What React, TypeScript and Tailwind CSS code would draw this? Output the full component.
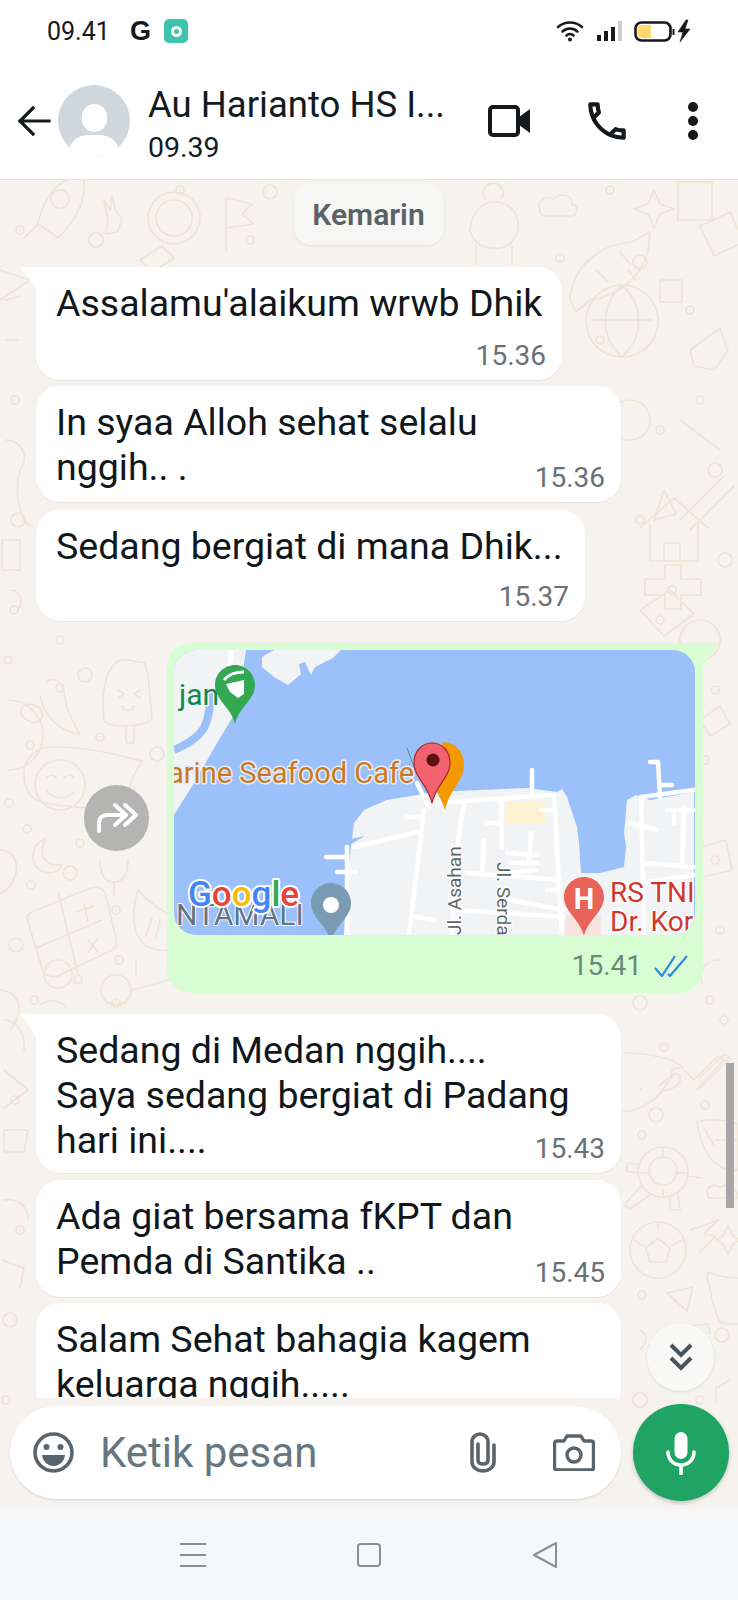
const font = "font-['Roboto',sans-serif]";

interface IBubble {
  lines: string[];
  time?: string;
  width: string;
  top: string;
  timeOffset?: string;
  tail?: boolean;
}

const dots = [
  [96, 240], [20, 230], [180, 190], [205, 290], [270, 192], [250, 240], [560, 258], [610, 190], [640, 262], [690, 310], [600, 340],
  [15, 400], [18, 520], [14, 610], [8, 660], [60, 688], [85, 675], [60, 640], [30, 745], [100, 737], [157, 754], [9, 803], [27, 829],
  [80, 843], [70, 873], [31, 885], [116, 910], [116, 1003], [16, 945], [119, 960], [78, 979], [34, 1000], [640, 1003], [664, 1047],
  [700, 400], [660, 430], [715, 470], [640, 520], [672, 590], [690, 650], [725, 560], [660, 620], [715, 690], [705, 760], [656, 1115],
  [642, 1135], [705, 1105], [642, 1295], [722, 1335], [715, 860], [720, 930], [710, 1000], [640, 1400], [700, 1400], [20, 1230],
  [15, 1100], [10, 1320], [724, 1020], [650, 1480], [6, 1400], [30, 1480],
];

const Wallpaper = () => (
  <svg className="absolute left-0 top-0" width="738" height="1329" viewBox="0 180 738 1329" fill="none" stroke="#eee3d5" strokeWidth="1.7" strokeLinecap="round" strokeLinejoin="round">
    {dots.map(([x, y], i) => (
      <circle key={i} cx={x} cy={y} r={i % 4 === 0 ? 7 : 4} />
    ))}
    {/* rocket */}
    <path d="M84 180c2 22-8 40-26 58l-20-14c4-20 14-36 28-44M38 224l-14 14M60 190a9 9 0 1 0 .1 0" />
    {/* hand, astronaut, flag */}
    <path d="M108 220l-4-20 6 10 2-14 4 16 6 6-4 14-12 2zM174 192a26 26 0 1 0 .1 0M174 200a18 18 0 1 0 .1 0M226 250v-52l26 6-10 10 12 10-28 4" />
    <path d="M140 260l22-14 12 12-22 14z" />
    {/* girl */}
    <path d="M470 230c2-20 14-30 28-28 14 2 22 14 20 28-4 14-14 20-26 18-12 0-20-8-22-18zM486 200a10 10 0 1 1 16 -2M476 246v18M512 246v18" />
    {/* cloud, star, frame */}
    <path d="M540 210c-4-10 8-16 14-10 4-8 18-6 18 4 8 2 6 12-2 12h-26c-2 0-4-2-4-6zM654 190l6 14 14 5-14 5-6 14-6-14-14-5 14-5zM678 182h34v38h-34zM700 226l30-14 14 30-30 14z" />
    {/* fish */}
    <path d="M570 300c2-34 30-56 62-58l18-10-2 18c-6 26-28 46-58 50l-14 12zM620 252l10 12M596 270l12 12" />
    {/* ball */}
    <path d="M622 285a36 36 0 1 0 .1 0M622 285c-22 20-22 52 0 72M622 285c22 20 22 52 0 72M592 320h60M628 270l8 10" />
    <path d="M660 280h22v22h-22zM690 350l30-22 8 22-14 20-20-4zM680 420l40 30M664 490l-10 30 22-6zM680 520l44-44M690 530l44-44" />
    {/* house */}
    <path d="M640 528l34-30 34 30M650 525v36h48v-36M664 561v-18h16v18" />
    <path d="M625 545h20v-14h16v14h20v16h-20v14h-16v-14h-20z" transform="translate(20 34)" />
    <path d="M590 390a24 24 0 1 0 .1 0M630 400a20 20 0 1 0 .1 0M700 620a20 20 0 1 0 .1 0M640 610l30-20 24 24-30 22z" />
    {/* ice cream */}
    <path d="M104 720c-4-26 2-56 18-60 10-2 16 4 22 2l4 12 4 44c0 8-46 12-48 2zM126 726v14c0 4 8 4 8 0v-15M118 690l6 4-6 4M140 690l-6 4 6 4M122 706c2 6 10 6 12 0" />
    {/* chili */}
    <path d="M46 682c8-6 16 0 18 10 2 18 8 30 16 42-18-2-36-16-40-38M22 708c4-6 12-4 18 0 6 8 0 16-8 14-8-2-14-8-10-14" />
    {/* smiley bubble */}
    <path d="M60 750a25 25 0 1 0 .1 0" transform="translate(0 10)" />
    <path d="M24 775c0-18 12-28 30-28 36 0 64 8 88 14l-10 18-10 30c-20 0-54-2-78-6-14-4-20-14-20-28zM46 778c4-4 8-4 10 0M64 778c4-4 8-4 10 0M46 790c8 10 20 10 28 2" />
    {/* moon, mic, calculator */}
    <path d="M46 838c-14 6-18 24-6 32 10 6 20 2 22-6-10 4-20-4-20-12 0-6 2-10 4-14zM100 860c0 16 6 22 14 22s14-6 14-22M114 882v14" />
    <path d="M32 912l58-24c8-2 14 0 16 8l10 42c2 8-2 12-8 14l-50 24c-8 2-14 0-16-8l-14-46c-2-6 0-8 4-10zM58 892l20 82M36 948l66-28M84 904l4 18M76 912l18-6M88 940l10 12M98 938l-10 14" />
    <path d="M46 948a14 14 0 1 0 .1 0" transform="translate(12 12)" />
    <path d="M138 890c12 14 24 20 30 24v36c-12 2-26-2-32-18-4-16-2-30 2-42zM152 918l-6 18M160 920l-4 18" />
    {/* scissors */}
    <path d="M116 975a15 15 0 1 0 .1 0M132 990l44-12M136 960v16" />
    <path d="M40 1005c6-6 20-6 26 2M-4 990c24 0 30 20 14 40" />
    <path d="M8 700a30 30 0 0 1 0 70M0 850c20 0 24 30 0 44" />
    {/* cup, checks */}
    <path d="M623 1053c22 0 48 4 60 14l-10 2c-4 4 2 8-6 14-10 20-34 30-44 28M660 1085l12-10c4-2 10-2 8 6-2 6-12 10-18 10M640 1088l2 2" />
    <path d="M684 1070l10 10 24-24 6 4-28 30M700 1078l24-24 6 4-30 30" />
    {/* rugby, turtle, cloud, soccer, pot */}
    <path d="M697 1122c14-4 30-2 41 2v46c-20 2-36-14-41-48zM704 1128l10 18M716 1140h22" />
    <path d="M663 1147a25 25 0 1 0 .1 0M663 1157a14 14 0 1 0 .1 0M663 1147v10M640 1173h10M676 1173h10M663 1190v8M640 1165l-12-2-2 8 12 2M688 1176l14 2M650 1195l-20 14-6-4 18-20M670 1198v12h10l-2-14" />
    <path d="M708 1196c-4-10 8-14 12-8 6-6 18 0 18 10h-30z" />
    <path d="M658 1222a28 28 0 1 0 .1 0M658 1238l12 10-4 14h-16l-4-14zM658 1222v8M634 1240l10 6M682 1240l-10 6M690 1230l28-10-14 14 12 2-16 16" />
    <path d="M728 1226l6 11 6 3-6 3-6 11-6-11-6-3 6-3z" />
    <path d="M667 1293l26-6-6 24zM708 1272c10 4 22 6 30 6M708 1272c-2 8 0 12 2 16 2 14 6 26 10 34 4 2 12 2 18 2" />
    <path d="M640 1330c10 6 6 14 0 20M690 1326l18-2 2 10M660 1360c10-12 26-6 22 10M600 1370v10M730 1380l-14 8v14" />
    {/* around the first bubbles */}
    <path d="M0 270l30 10-30 20M20 470c-8 30 4 56 12 56M6 300l14-4M6 340h12M6 440a18 18 0 0 1 14 30M2 540h18v30H2zM10 590c10 0 14 10 8 20" />
    <path d="M4 1020c12 0 22 14 20 30M4 1070l24 20-24 18M4 1130h24l-4 22H4zM4 1200c14-2 24 6 24 20M2 1260l22 8-4 20" />
    <path d="M636 690c12-2 18 10 8 18-10 6-18-2-12-14M700 720l20-14 10 18-20 12zM650 770c16-4 30 6 30 20s-14 24-28 20M690 850l36-10 6 30-34 8zM650 900a24 24 0 1 0 .1 0M720 960c-14 0-22 10-18 24" />
  </svg>
);

const StatusBar = () => (
  <div className="h-[62px] flex items-center pl-[47px] pr-[48px] bg-white text-[#15191c]">
    <span className="text-[25px] leading-none w-[83px]">09.41</span>
    <span className="text-[27px] font-black leading-none w-[34px] font-['Liberation_Sans',sans-serif]">G</span>
    <div className="w-[24px] h-[24px] rounded-[5px] bg-[#3cc4ad] flex items-center justify-center">
      <div className="w-[11px] h-[11px] rounded-full border-[3px] border-white" />
    </div>
    <svg className="ml-auto" width="134" height="24" viewBox="0 0 134 24" fill="none">
      <path d="M2 8c7-6 17-6 24 0M6.500 12.500c4.500-4 10.500-4 15 0M10.500 16.500c2-2 5-2 7 0" stroke="#15191c" strokeWidth="2.600" strokeLinecap="round" />
      <circle cx="14" cy="20.500" r="2" fill="#15191c" />
      <rect x="41" y="16" width="4" height="6" fill="#15191c" />
      <rect x="48" y="12" width="4" height="10" fill="#15191c" />
      <rect x="55" y="8" width="4" height="14" fill="#15191c" />
      <rect x="62" y="2" width="4" height="20" fill="#cfcfcf" />
      <rect x="79.500" y="3.500" width="35" height="18" rx="6" fill="#fff" stroke="#15191c" strokeWidth="2.600" />
      <path d="M85 6h10v13H85c-2 0-3.500-2-3.500-4V9c0-2 1.500-3 3.500-3z" fill="#fbd96f" />
      <rect x="116.500" y="10" width="2" height="6" fill="#15191c" />
      <path d="M130 1l-8 12h5l-3 10 10-13h-5l3-9z" fill="#15191c" stroke="#15191c" strokeWidth="0.600" />
    </svg>
  </div>
);

const Header = () => (
  <div className="h-[118px] flex items-center bg-white border-b border-[#e6e3df]">
    <svg className="ml-[17px]" width="34" height="34" viewBox="0 0 34 34" fill="none" stroke="#15191c" strokeWidth="3.200" strokeLinecap="square">
      <path d="M3 17h29M16 4L3 17l13 13" />
    </svg>
    <div className="ml-[7px] w-[72px] h-[72px] rounded-full bg-[#cfd7df] overflow-hidden flex flex-col items-center shrink-0">
      <div className="mt-[19px] w-[25px] h-[28px] rounded-full bg-white shrink-0" />
      <div className="mt-[3px] w-[52px] h-[40px] rounded-full bg-white shrink-0" />
    </div>
    <div className="ml-[18px] mt-[7px] w-[338px] flex flex-col text-[#111b21]">
      <span className="text-[36.5px] leading-[44px]">Au Harianto HS I...</span>
      <span className="text-[28.5px] leading-[36px] mt-[3px]">09.39</span>
    </div>
    <svg width="44" height="34" viewBox="0 0 44 34" fill="none">
      <rect x="4" y="3" width="28" height="28" rx="3" stroke="#15191c" strokeWidth="4" />
      <path d="M33 13l11-8v24l-11-8z" fill="#15191c" />
    </svg>
    <svg className="ml-[52px]" width="50" height="50" viewBox="0 0 24 24" fill="#15191c">
      <path d="M6.540 5c.06.89.21 1.760.45 2.590l-1.200 1.200c-.41-1.200-.67-2.470-.76-3.790h1.510m9.860 12.020c.85.24 1.720.39 2.600.45v1.490c-1.320-.09-2.590-.35-3.800-.75l1.200-1.190M7.500 3H4c-.55 0-1 .45-1 1 0 9.390 7.610 17 17 17 .55 0 1-.45 1-1v-3.490c0-.55-.45-1-1-1-1.240 0-2.450-.2-3.570-.57-.1-.04-.21-.05-.31-.05-.26 0-.51.1-.71.29l-2.200 2.200c-2.830-1.450-5.150-3.760-6.590-6.590l2.200-2.200c.28-.28.36-.67.25-1.020C8.700 6.450 8.500 5.250 8.500 4c0-.55-.45-1-1-1z" />
    </svg>
    <div className="ml-[56px] flex flex-col gap-[4px]">
      <div className="w-[10px] h-[10px] rounded-full bg-[#15191c]" />
      <div className="w-[10px] h-[10px] rounded-full bg-[#15191c]" />
      <div className="w-[10px] h-[10px] rounded-full bg-[#15191c]" />
    </div>
  </div>
);

const Bubble = ({ lines, time, width, top, timeOffset, tail }: IBubble) => (
  <div className={`relative shrink-0 ${width} ${top} flex flex-col bg-white pl-[20px] pr-[16px] pt-[14px] pb-[8px] rounded-[24px] ${tail ? "rounded-tl-none" : ""} shadow-[0_1px_1px_rgba(0,0,0,0.06)]`}>
    {tail && (
      <svg className="absolute -left-[15px] top-0" width="16" height="24" viewBox="0 0 16 24">
        <path d="M0 0h16v24C10 14 5 8 1 3 0 2 0 1 0 0z" fill="#fff" />
      </svg>
    )}
    <div className="text-[37.5px] leading-[45px] text-[#10171b] whitespace-nowrap">
      {lines.map((l) => (
        <div key={l}>{l}</div>
      ))}
    </div>
    {time && <span className={`self-end text-[28px] leading-[32px] text-[#697175] ${timeOffset}`}>{time}</span>}
  </div>
);

const MapPin = ({ x, y, fill }: { x: number; y: number; fill: string }) => (
  <path d={`M${x} ${y}c-11 0-20 9-20 20 0 15 16 22 20 39 4-17 20-24 20-39 0-11-9-20-20-20z`} fill={fill} />
);

const roads = [
  "M417 783l12 24M434 803l120-8 8 140M424 810l-15 125M407 817h14",
  "M464 803l-8 50-4 82M501 800l1 47M487 823h14M541 810h13M531 833l-2 27M484 840l-2 33",
  "M507 853l30 2M510 863l27 0M510 873l26-3M467 873l93 7M457 910l107 7M510 900l54 10M547 890h13",
  "M532 770v22M650 762h8l2 35M660 785h12",
  "M641 798l3 137M641 797l53-7M631 823l26 7M667 810h27M674 813v10M684 807l-2 56M647 863l47 4M628 885l66-10",
  "M354 847l63-15M347 847v88M326 857h21M337 872h19M414 917l20 3",
];

const MapView = () => (
  <svg className="block rounded-[22px]" width="521" height="285" viewBox="174 650 521 285">
    <rect x="174" y="650" width="521" height="285" fill="#9cc0f9" />
    <path d="M174 650h72l-3 20-6 40-20 33-23 40-20 32z" fill="#f1f3f4" />
    <path d="M174 750c14-6 24-12 30-22 6-12 6-24 6-38" fill="none" stroke="#9cc0f9" strokeWidth="8" />
    <path d="M232 650l-4 24" stroke="#fff" strokeWidth="5" />
    <path d="M262 657l12-7h67l-8 8-18 9-4 8-6-13-6 2 2 10-13 11-14-8-12-10z" fill="#f1f3f4" />
    <path d="M344 935l3-58 4-30 3-24 10-13 23-10 30-5 17-3 93-4 30 4 5-3 5 8 10 30 2 16 2 30 19 0 24-6 2-20-2-14 3-33 9-5 14 5 44-8v143z" fill="#f1f3f4" />
    <path d="M341 841l24-5-14 8z" fill="#9cc0f9" />
    <rect x="505" y="801" width="40" height="22" fill="#fdf1d2" />
    <rect x="565" y="915" width="36" height="20" fill="#f9e4e2" />
    <rect x="339" y="925" width="5" height="10" fill="#9cc0f9" />
    {roads.map((d) => (
      <path key={d} d={d} fill="none" stroke="#fff" strokeWidth="4.500" strokeLinecap="round" strokeLinejoin="round" />
    ))}

    <g fontFamily="Roboto, sans-serif" style={{ paintOrder: "stroke" }} stroke="#fff" strokeWidth="3" strokeLinejoin="round">
      <text x="179" y="705" fontSize="30" fill="#0c8a52" stroke="#f1f3f4">jan</text>
      <text x="168" y="783" fontSize="29" fill="#c9791f" stroke="#e8eefb">arine Seafood Cafe</text>
      <text x="176" y="925" fontSize="30" fill="#5f7486" strokeWidth="2">NTAMALI</text>
      <text x="610" y="902" fontSize="28" fill="#d0382e">RS TNI</text>
      <text x="610" y="931" fontSize="28" fill="#d0382e">Dr. Kor</text>
      <text transform="translate(461 935) rotate(-90)" fontSize="19" fill="#5f6368">Jl. Asahan</text>
      <text transform="translate(497 862) rotate(90)" fontSize="19" fill="#5f6368">Jl. Serda</text>
      <text x="188" y="906" fontSize="35" fontWeight="500" strokeWidth="4">
        <tspan fill="#4285f4">G</tspan>
        <tspan fill="#ea4335">o</tspan>
        <tspan fill="#fbbc05">o</tspan>
        <tspan fill="#4285f4">g</tspan>
        <tspan fill="#34a853">l</tspan>
        <tspan fill="#ea4335">e</tspan>
      </text>
    </g>

    <MapPin x={235} y={665} fill="#33a852" />
    <path d="M226 684l18-4v14l-6 4-8-6z" fill="#fff" />
    <path d="M224 680c4-5 12-8 20-8" stroke="#fff" strokeWidth="3" fill="none" />
    <MapPin x={331} y={883} fill="#7a9bb3" />
    <circle cx="331" cy="905" r="8" fill="#fff" />
    <MapPin x={584} y={877} fill="#e8645b" />
    <text x="584" y="909" textAnchor="middle" fontFamily="Roboto, sans-serif" fontSize="29" fontWeight="700" fill="#fff">H</text>
    <path d="M407 748l9 24" stroke="#3aa76d" strokeWidth="1" />
    <path d="M443 742c11 0 21 9 21 22 0 18-14 24-19 46-3-10-8-18-12-24z" fill="#f29900" />
    <path d="M432 743c-10 0-18 8-18 20 0 14 14 22 18 40 4-18 18-26 18-40 0-12-8-20-18-20z" fill="#f2626f" stroke="#a8292f" strokeWidth="1.200" />
    <circle cx="433" cy="760" r="6.500" fill="#5a1010" />
  </svg>
);

export default function App() {
  return (
    <div className={`${font} w-[738px] h-[1600px] flex flex-col overflow-hidden bg-white`}>
      <StatusBar />
      <Header />

      <div className="relative h-[1329px] shrink-0 bg-[#f6f3ee] overflow-hidden">
        <Wallpaper />

        <div className="relative h-[1218px] overflow-hidden flex flex-col pl-[36px] pr-[35px] pt-[3px]">
          <div className="self-center shrink-0 w-[150px] h-[62px] ml-[-2px] flex items-center justify-center rounded-[16px] bg-[#f6f6f5] shadow-[0_1px_2px_rgba(0,0,0,0.08)] text-[30px] font-semibold text-[#5b6267]">
            Kemarin
          </div>

          <Bubble tail lines={["Assalamu'alaikum wrwb Dhik"]} time="15.36" width="w-[526px]" top="mt-[22px]" timeOffset="mt-[14px]" />
          <Bubble lines={["In syaa Alloh sehat selalu", "nggih.. ."]} time="15.36" width="w-[585px]" top="mt-[6px]" timeOffset="-mt-[28px]" />
          <Bubble lines={["Sedang bergiat di mana Dhik..."]} time="15.37" width="w-[549px]" top="mt-[8px]" timeOffset="mt-[12px]" />

          <div className="self-end mt-[22px] flex items-center gap-[18px] shrink-0">
            <div className="w-[65px] h-[66px] rounded-full bg-[#b4b4b2] flex items-center justify-center">
              <svg width="42" height="32" viewBox="0 0 42 32" fill="none" stroke="#fff" strokeWidth="4" strokeLinecap="round" strokeLinejoin="round">
                <path d="M3 29v-8c0-5 3-8 8-8h14M19 3l11 10-11 10M29 3l11 10-11 10" />
              </svg>
            </div>
            <div className="relative w-[536px] h-[350px] bg-[#d9fdd3] rounded-[24px] rounded-tr-none p-[7px] flex flex-col">
              <svg className="absolute -right-[15px] top-0" width="16" height="24" viewBox="0 0 16 24">
                <path d="M16 0H0v24C6 14 11 8 15 3c1-1 1-2 1-3z" fill="#d9fdd3" />
              </svg>
              <MapView />
              <div className="mt-[15px] pr-[7px] flex items-center justify-end gap-[12px]">
                <span className="text-[28px] leading-[32px] text-[#6b8a74]">15.41</span>
                <svg width="35" height="22" viewBox="0 0 35 22" fill="none" stroke="#2f86e6" strokeWidth="2.200">
                  <path d="M1 13l7 8L21 1M14 19l2 2L33 1" />
                </svg>
              </div>
            </div>
          </div>

          <Bubble tail lines={["Sedang di Medan nggih....", "Saya sedang bergiat di Padang", "hari ini...."]} time="15.43" width="w-[585px]" top="mt-[21px]" timeOffset="-mt-[30px]" />
          <Bubble lines={["Ada giat bersama fKPT dan", "Pemda di Santika .."]} time="15.45" width="w-[585px]" top="mt-[7px]" timeOffset="-mt-[27px]" />
          <Bubble lines={["Salam Sehat bahagia kagem", "keluarga nggih....."]} width="w-[585px]" top="mt-[6px]" />
        </div>

        {/* scrollbar */}
        <div className="absolute left-[726px] top-[883px] w-[8px] h-[145px] bg-[#a6a6a6]" />

        {/* jump to bottom */}
        <div className="absolute left-[647px] top-[1143px] w-[67px] h-[68px] rounded-full bg-[#f8f8f7] shadow-[0_1px_3px_rgba(0,0,0,0.1)] flex items-center justify-center">
          <svg width="26" height="28" viewBox="0 0 26 28" fill="none" stroke="#48535b" strokeWidth="4">
            <path d="M3 2l10 10L23 2M3 15l10 10 10-10" />
          </svg>
        </div>

        <div className="relative mt-[6px] pl-[10px] flex items-center gap-[12px]">
          <div className="w-[611px] h-[93px] rounded-full bg-white shadow-[0_1px_2px_rgba(0,0,0,0.12)] flex items-center pl-[23px]">
            <svg className="shrink-0" width="41" height="41" viewBox="0 0 41 41" fill="none">
              <circle cx="20.500" cy="20.500" r="18.500" stroke="#59646c" strokeWidth="3.600" />
              <circle cx="13.500" cy="15" r="3" fill="#59646c" />
              <circle cx="27.500" cy="15" r="3" fill="#59646c" />
              <path d="M9 23h23c-1 7-6 11-11.500 11S10 30 9 23z" fill="#59646c" />
            </svg>
            <span className="ml-[26px] w-[370px] shrink-0 text-[42px] text-[#667781]">Ketik pesan</span>
            <svg className="shrink-0" width="26" height="41" viewBox="0 0 26 41" fill="none" stroke="#59646c" strokeWidth="3.600" strokeLinecap="round">
              <path d="M24 13v17c0 5-5 9-11 9S2 35 2 30V10C2 5 6 2 10 2s8 3 8 8v18c0 3-2 4-5 4s-5-1-5-4V12" />
            </svg>
            <svg className="ml-[57px] shrink-0" width="42" height="37" viewBox="0 0 42 37" fill="none">
              <path d="M14 2h14l3 5h7c1.500 0 2.500 1 2.500 2.500v24c0 1.500-1 2.500-2.500 2.500H4c-1.500 0-2.500-1-2.500-2.500v-24C1.500 8 2.500 7 4 7h7z" stroke="#59646c" strokeWidth="3.400" strokeLinejoin="round" />
              <circle cx="21" cy="21" r="7" stroke="#59646c" strokeWidth="3.400" />
            </svg>
          </div>
          <div className="w-[96px] h-[97px] rounded-full bg-[#1fa463] shadow-[0_2px_4px_rgba(0,0,0,0.2)] flex items-center justify-center">
            <svg width="30" height="44" viewBox="0 0 30 44" fill="none">
              <rect x="8.500" y="1" width="13" height="27" rx="6.500" fill="#fff" />
              <path d="M2 21c0 8 6 13 13 13s13-5 13-13M15 34v9" stroke="#fff" strokeWidth="3.600" strokeLinecap="round" />
            </svg>
          </div>
        </div>
      </div>

      <div className="flex-1 bg-[#f6f7f9] flex items-center pl-[180px] pt-[1px]">
        <svg width="26" height="24" viewBox="0 0 26 24" stroke="#8c8f92" strokeWidth="2">
          <path d="M0 1h26M0 12h26M0 23h26" />
        </svg>
        <div className="ml-[151px] w-[24px] h-[24px] rounded-[4px] border-2 border-[#8c8f92]" />
        <svg className="ml-[152px]" width="24" height="26" viewBox="0 0 24 26" fill="none" stroke="#8c8f92" strokeWidth="2" strokeLinejoin="round">
          <path d="M23 1v24L1 13z" />
        </svg>
      </div>
    </div>
  );
}
